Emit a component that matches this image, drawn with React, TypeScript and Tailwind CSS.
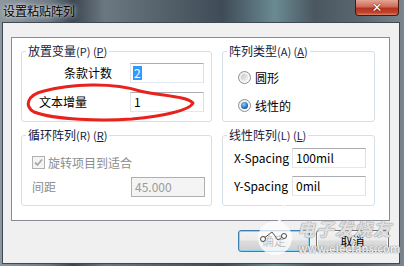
import React from 'react';

const font = "font-['Noto_Sans_CJK_SC','Noto_Sans',sans-serif]";

const Legend = ({ text, hot }: { text: string; hot: string }) => (
  <legend className="ml-[4px] px-[2px] text-[12px] leading-[14px] text-[#141a3c]">
    {text}
    <span className="text-[11px]">({hot}) (</span>
    <span className="text-[11px] underline">{hot}</span>
    <span className="text-[11px]">)</span>
  </legend>
);

const TextBox = ({ value, selected, disabled }: { value: string; selected?: boolean; disabled?: boolean }) => (
  <div
    className={`w-[74px] h-[20px] border flex items-center px-[2px] text-[12px] leading-[14px] ${
      disabled
        ? 'bg-[#f4f4f4] text-[#9a9a9a] border-[#afafaf]'
        : 'bg-white text-black border-[#abadb3] border-l-[#e2e3ea] border-b-[#e3e9ef] border-r-[#dbdfe6]'
    }`}
  >
    {selected ? <span className="bg-[#3399ff] text-white px-[1px]">{value}</span> : <span className="pl-[1px]">{value}</span>}
  </div>
);

const Radio = ({ checked, label }: { checked?: boolean; label: string }) => (
  <div className="flex items-center h-[19px] gap-[4px]">
    <div className="w-[13px] h-[13px] rounded-full border border-[#8e8f8f] bg-[linear-gradient(135deg,#e8e8e8,#ffffff)] flex items-center justify-center">
      {checked ? (
        <div className="w-[7px] h-[7px] rounded-full bg-[radial-gradient(circle_at_40%_35%,#8ed0ff,#1f6cb5_60%,#0f3f78)]" />
      ) : (
        <div className="w-[7px] h-[7px] rounded-full bg-[linear-gradient(135deg,#c8c8c8,#f4f4f4)]" />
      )}
    </div>
    <span className="text-[12px] leading-[14px] text-black">{label}</span>
  </div>
);

const Watermark = () => (
  <div className="absolute left-[250px] top-[198px] w-[150px] h-[62px] pointer-events-none">
    <svg width="150" height="62" className="absolute left-0 top-0">
      <circle cx="25" cy="40" r="17" fill="rgba(255,255,255,0.75)" />
      <path d="M33 2 C36 10 35 18 28 24" stroke="rgba(255,255,255,0.9)" strokeWidth="2" fill="none" />
      <path d="M13 41 L22 34 L28 42 L34 38" stroke="#555" strokeWidth="1" fill="none" />
      <circle cx="13" cy="41" r="2.5" fill="white" stroke="#444" strokeWidth="1" />
      <circle cx="34" cy="38" r="2.5" fill="white" stroke="#444" strokeWidth="1" />
    </svg>
    <div className="absolute left-[47px] top-[20px] text-[18px] leading-[20px] italic font-bold text-white/75 [text-shadow:0_0_1px_#888,0_0_1px_#888] tracking-[1px]">
      电子发烧友
    </div>
    <div className="absolute left-[48px] top-[45px] text-[11px] leading-[11px] font-bold text-white/85 [text-shadow:0_0_1px_#777,0_0_1px_#777]">
      www.elecfans.com
    </div>
  </div>
);

export default function App() {
  return (
    <div
      className={`${font} relative w-[404px] h-[266px] overflow-hidden bg-[linear-gradient(90deg,#8d979e_0%,#6e7a83_12%,#3b4651_18%,#6c7881_26%,#55616b_40%,#3f4b56_55%,#6a8a92_68%,#4a5660_78%,#5c6871_90%,#7a858c_100%)]`}
    >
      {/* title bar */}
      <div className="h-[22px] flex items-start">
        <div className="pl-[3px] pt-[3px] text-[12px] leading-[16px] text-black [text-shadow:0_0_6px_rgba(255,255,255,0.9),0_0_3px_rgba(255,255,255,0.7)]">
          设置粘贴阵列
        </div>
        <div className="ml-auto mr-[5px] w-[44px] h-[16px] rounded-b-[4px] border border-t-0 border-[#471812] bg-[linear-gradient(180deg,#e4a594_0%,#cf6a55_45%,#b8321f_55%,#c0452c_85%,#d8866c_100%)] flex items-center justify-center">
          <span className="text-white text-[13px] font-bold leading-[13px] font-['DejaVu_Sans',sans-serif] [text-shadow:0_0_1px_#3a1008,0_0_1px_#3a1008]">
            ✕
          </span>
        </div>
      </div>

      {/* client */}
      <div className="ml-[2px] w-[398px] h-[242px] border border-[#3f4953] bg-[#f0f0f0] flex flex-col">
        <div className="mt-[14px] ml-[8px] w-[379px] h-[184px] border border-[#898c95] bg-white pt-[6px] pl-[9px]">
          <div className="grid grid-cols-[191px_153px] grid-rows-[78px_78px] gap-x-[10px] gap-y-[6px]">
            {/* 放置变量 */}
            <fieldset className="border border-[#d5dfe5] rounded-[3px]">
              <Legend text="放置变量" hot="P" />
              <div className="mt-[5px] flex items-center h-[20px]">
                <div className="w-[90px] text-right text-[12px] leading-[14px]">条款计数</div>
                <div className="ml-[18px]">
                  <TextBox value="2" selected />
                </div>
              </div>
              <div className="mt-[9px] flex items-center h-[20px]">
                <div className="w-[90px] pl-[17px] text-[12px] leading-[14px]">文本增量</div>
                <div className="ml-[18px]">
                  <TextBox value="1" />
                </div>
              </div>
            </fieldset>

            {/* 阵列类型 */}
            <fieldset className="border border-[#d5dfe5] rounded-[3px]">
              <Legend text="阵列类型" hot="A" />
              <div className="pl-[15px]">
                <div className="mt-[10px]">
                  <Radio label="圆形" />
                </div>
                <div className="mt-[9px]">
                  <Radio label="线性的" checked />
                </div>
              </div>
            </fieldset>

            {/* 循环阵列 */}
            <fieldset className="border border-[#d5dfe5] rounded-[3px]">
              <Legend text="循环阵列" hot="R" />
              <div className="pl-[10px]">
                <div className="mt-[11px] h-[19px] flex items-center gap-[3px]">
                  <div className="w-[13px] h-[13px] border border-[#b1b1b1] bg-[#f4f4f4] flex items-center justify-center">
                    <svg width="9" height="9" viewBox="0 0 9 9">
                      <path d="M1 4.5 L3.5 7 L8 1.5" stroke="#a8a8a8" strokeWidth="1.8" fill="none" />
                    </svg>
                  </div>
                  <span className="text-[12px] leading-[14px] text-[#8d8d8d]">旋转项目到适合</span>
                </div>
                <div className="mt-[5px] flex items-center h-[20px]">
                  <div className="w-[99px] text-[12px] leading-[14px] text-[#8d8d8d]">间距</div>
                  <TextBox value="45.000" disabled />
                </div>
              </div>
            </fieldset>

            {/* 线性阵列 */}
            <fieldset className="border border-[#d5dfe5] rounded-[3px]">
              <Legend text="线性阵列" hot="L" />
              <div className="pl-[11px]">
                <div className="mt-[6px] flex items-center h-[20px]">
                  <div className="w-[58px] text-[12px] leading-[14px]">X-Spacing</div>
                  <TextBox value="100mil" />
                </div>
                <div className="mt-[8px] flex items-center h-[20px]">
                  <div className="w-[58px] text-[12px] leading-[14px]">Y-Spacing</div>
                  <TextBox value="0mil" />
                </div>
              </div>
            </fieldset>
          </div>
        </div>

        {/* buttons */}
        <div className="mt-[9px] flex justify-end gap-[6px] pr-[10px]">
          <button className="w-[72px] h-[22px] rounded-[3px] border border-[#3c7fb1] bg-[linear-gradient(180deg,#f2f2f2_0%,#ebebeb_45%,#dddddd_50%,#cfcfcf_100%)] shadow-[inset_0_0_0_1px_#8ad3f5] text-[12px] leading-[14px] text-black">
            确定
          </button>
          <button className="w-[73px] h-[22px] rounded-[3px] border border-[#707070] bg-[linear-gradient(180deg,#f2f2f2_0%,#ebebeb_45%,#dddddd_50%,#cfcfcf_100%)] shadow-[inset_0_0_0_1px_#fcfcfc] text-[12px] leading-[14px] text-black">
            取消
          </button>
        </div>
      </div>

      {/* hand-drawn red marker */}
      <svg className="absolute left-0 top-0 pointer-events-none" width="404" height="266">
        <path
          d="M44 91 C70 84 112 82 140 91 C162 96 186 96 193 103 C190 110 165 116 132 119 C102 121 55 120 34 112 C24 106 27 95 44 91 Z"
          stroke="#e8231d"
          strokeWidth="3"
          fill="none"
          strokeLinejoin="round"
        />
      </svg>

      <Watermark />
    </div>
  );
}
